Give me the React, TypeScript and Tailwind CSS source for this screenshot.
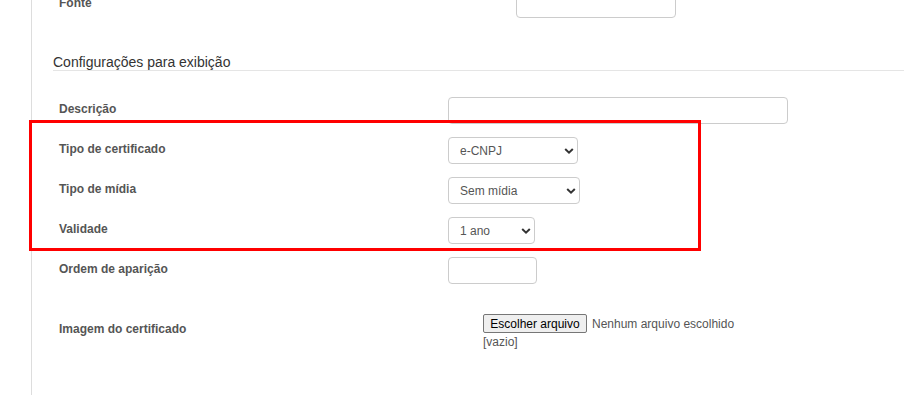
import type { ReactNode } from 'react';

function Row({ label, className = '', children }: { label: string; className?: string; children: ReactNode }) {
  return (
    <div className={`flex h-[27px] shrink-0 items-center ${className}`}>
      <label className="ml-[27px] w-[389px] shrink-0 pb-1 font-bold leading-[14px] text-[#555]">{label}</label>
      {children}
    </div>
  );
}

function Select({ value, width }: { value: string; width: string }) {
  return (
    <div className={`relative ${width}`}>
      <select
        defaultValue={value}
        className="h-[27px] w-full appearance-none rounded-[4px] border border-[#ccc] bg-white pl-[11px] text-[12px] text-[#555] outline-none"
      >
        <option>{value}</option>
      </select>
      <svg
        className="pointer-events-none absolute right-[4px] top-1/2 -translate-y-1/2"
        width="10"
        height="7"
        viewBox="0 0 10 7"
        fill="none"
      >
        <polyline points="1.2,1.5 5,5.2 8.8,1.5" stroke="#333" strokeWidth="2" />
      </svg>
    </div>
  );
}

export default function App() {
  const field = 'h-[27px] rounded-[4px] border border-[#ccc] bg-white outline-none';

  return (
    <div className="relative h-[397px] w-[904px] overflow-hidden bg-white font-['Liberation_Sans',Arial,sans-serif] text-[12px] text-[#555]">
      <div className="ml-[31px] flex h-[395px] flex-col border-l border-[#ddd]">
        {/* Previous section, cut off */}
        <Row label="Fonte" className="-mt-[9px]">
          <input className={`${field} ml-[68px] w-[160px]`} />
        </Row>

        <div className="ml-[21px] mt-[36px] shrink-0 border-b border-[#e5e5e5] text-[14px] leading-4 text-[#333]">
          Configurações para exibição
        </div>

        <div className="mt-[26px] flex shrink-0 flex-col gap-[13px]">
          <Row label="Descrição">
            <input className={`${field} w-[340px]`} />
          </Row>
          <Row label="Tipo de certificado">
            <Select value="e-CNPJ" width="w-[130px]" />
          </Row>
          <Row label="Tipo de mídia">
            <Select value="Sem mídia" width="w-[132px]" />
          </Row>
          <Row label="Validade">
            <Select value="1 ano" width="w-[87px]" />
          </Row>
          <Row label="Ordem de aparição">
            <input className={`${field} w-[89px]`} />
          </Row>
        </div>

        <div className="mt-[30px] flex shrink-0 items-start">
          <label className="ml-[27px] w-[389px] shrink-0 pt-[8px] font-bold leading-[14px] text-[#555]">
            Imagem do certificado
          </label>
          <div className="ml-[35px]">
            <div className="flex items-center">
              <button className="h-[19px] w-[104px] rounded-[2px] border border-[#767676] bg-[#efefef] text-[12px] leading-none text-black">
                Escolher arquivo
              </button>
              <span className="ml-[5px] leading-[14px]">Nenhum arquivo escolhido</span>
            </div>
            <div className="mt-[2px] leading-[14px]">[vazio]</div>
          </div>
        </div>
      </div>

      {/* Annotation box */}
      <div className="pointer-events-none absolute left-[29px] top-[120px] h-[131px] w-[672px] border-[3px] border-[#ff0000]" />
    </div>
  );
}
